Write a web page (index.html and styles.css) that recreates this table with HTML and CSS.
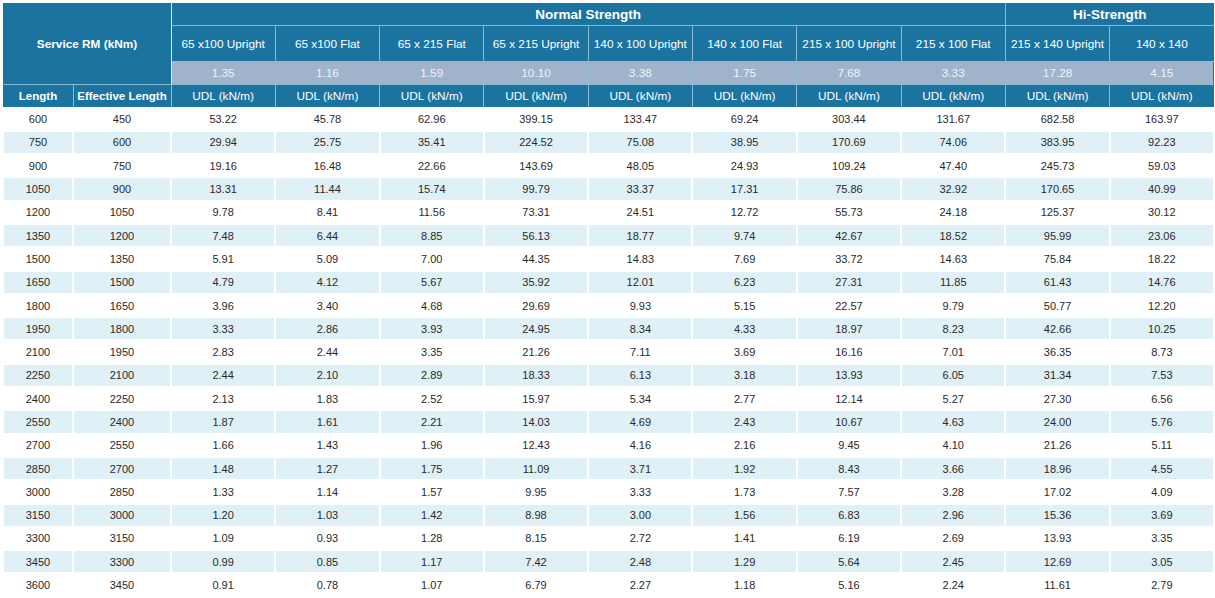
FILE: index.html
```html
<!DOCTYPE html>
<html>
<head>
<meta charset="utf-8">
<link rel="stylesheet" href="styles.css">
</head>
<body>
<table class="grid">
<colgroup>
<col class="c-len"><col class="c-eff">
<col class="c-v"><col class="c-v"><col class="c-v"><col class="c-v"><col class="c-v"><col class="c-v"><col class="c-v"><col class="c-v"><col class="c-v"><col class="c-v">
</colgroup>
<thead>
<tr class="h1">
<th class="svc" colspan="2" rowspan="3">Service RM (kNm)</th>
<th class="grp" colspan="8">Normal Strength</th>
<th class="grp" colspan="2">Hi-Strength</th>
</tr>
<tr class="h2">
<th>65 x100 Upright</th><th>65 x100 Flat</th><th>65 x 215 Flat</th><th>65 x 215 Upright</th><th>140 x 100 Upright</th><th>140 x 100 Flat</th><th>215 x 100 Upright</th><th>215 x 100 Flat</th><th>215 x 140 Upright</th><th>140 x 140</th>
</tr>
<tr class="h3">
<th>1.35</th><th>1.16</th><th>1.59</th><th>10.10</th><th>3.38</th><th>1.75</th><th>7.68</th><th>3.33</th><th>17.28</th><th>4.15</th>
</tr>
<tr class="h4">
<th class="b">Length</th><th class="b">Effective Length</th>
<th>UDL (kN/m)</th><th>UDL (kN/m)</th><th>UDL (kN/m)</th><th>UDL (kN/m)</th><th>UDL (kN/m)</th><th>UDL (kN/m)</th><th>UDL (kN/m)</th><th>UDL (kN/m)</th><th>UDL (kN/m)</th><th>UDL (kN/m)</th>
</tr>
</thead>
<tbody>
<tr><td>600</td><td>450</td><td>53.22</td><td>45.78</td><td>62.96</td><td>399.15</td><td>133.47</td><td>69.24</td><td>303.44</td><td>131.67</td><td>682.58</td><td>163.97</td></tr>
<tr><td>750</td><td>600</td><td>29.94</td><td>25.75</td><td>35.41</td><td>224.52</td><td>75.08</td><td>38.95</td><td>170.69</td><td>74.06</td><td>383.95</td><td>92.23</td></tr>
<tr><td>900</td><td>750</td><td>19.16</td><td>16.48</td><td>22.66</td><td>143.69</td><td>48.05</td><td>24.93</td><td>109.24</td><td>47.40</td><td>245.73</td><td>59.03</td></tr>
<tr><td>1050</td><td>900</td><td>13.31</td><td>11.44</td><td>15.74</td><td>99.79</td><td>33.37</td><td>17.31</td><td>75.86</td><td>32.92</td><td>170.65</td><td>40.99</td></tr>
<tr><td>1200</td><td>1050</td><td>9.78</td><td>8.41</td><td>11.56</td><td>73.31</td><td>24.51</td><td>12.72</td><td>55.73</td><td>24.18</td><td>125.37</td><td>30.12</td></tr>
<tr><td>1350</td><td>1200</td><td>7.48</td><td>6.44</td><td>8.85</td><td>56.13</td><td>18.77</td><td>9.74</td><td>42.67</td><td>18.52</td><td>95.99</td><td>23.06</td></tr>
<tr><td>1500</td><td>1350</td><td>5.91</td><td>5.09</td><td>7.00</td><td>44.35</td><td>14.83</td><td>7.69</td><td>33.72</td><td>14.63</td><td>75.84</td><td>18.22</td></tr>
<tr><td>1650</td><td>1500</td><td>4.79</td><td>4.12</td><td>5.67</td><td>35.92</td><td>12.01</td><td>6.23</td><td>27.31</td><td>11.85</td><td>61.43</td><td>14.76</td></tr>
<tr><td>1800</td><td>1650</td><td>3.96</td><td>3.40</td><td>4.68</td><td>29.69</td><td>9.93</td><td>5.15</td><td>22.57</td><td>9.79</td><td>50.77</td><td>12.20</td></tr>
<tr><td>1950</td><td>1800</td><td>3.33</td><td>2.86</td><td>3.93</td><td>24.95</td><td>8.34</td><td>4.33</td><td>18.97</td><td>8.23</td><td>42.66</td><td>10.25</td></tr>
<tr><td>2100</td><td>1950</td><td>2.83</td><td>2.44</td><td>3.35</td><td>21.26</td><td>7.11</td><td>3.69</td><td>16.16</td><td>7.01</td><td>36.35</td><td>8.73</td></tr>
<tr><td>2250</td><td>2100</td><td>2.44</td><td>2.10</td><td>2.89</td><td>18.33</td><td>6.13</td><td>3.18</td><td>13.93</td><td>6.05</td><td>31.34</td><td>7.53</td></tr>
<tr><td>2400</td><td>2250</td><td>2.13</td><td>1.83</td><td>2.52</td><td>15.97</td><td>5.34</td><td>2.77</td><td>12.14</td><td>5.27</td><td>27.30</td><td>6.56</td></tr>
<tr><td>2550</td><td>2400</td><td>1.87</td><td>1.61</td><td>2.21</td><td>14.03</td><td>4.69</td><td>2.43</td><td>10.67</td><td>4.63</td><td>24.00</td><td>5.76</td></tr>
<tr><td>2700</td><td>2550</td><td>1.66</td><td>1.43</td><td>1.96</td><td>12.43</td><td>4.16</td><td>2.16</td><td>9.45</td><td>4.10</td><td>21.26</td><td>5.11</td></tr>
<tr><td>2850</td><td>2700</td><td>1.48</td><td>1.27</td><td>1.75</td><td>11.09</td><td>3.71</td><td>1.92</td><td>8.43</td><td>3.66</td><td>18.96</td><td>4.55</td></tr>
<tr><td>3000</td><td>2850</td><td>1.33</td><td>1.14</td><td>1.57</td><td>9.95</td><td>3.33</td><td>1.73</td><td>7.57</td><td>3.28</td><td>17.02</td><td>4.09</td></tr>
<tr><td>3150</td><td>3000</td><td>1.20</td><td>1.03</td><td>1.42</td><td>8.98</td><td>3.00</td><td>1.56</td><td>6.83</td><td>2.96</td><td>15.36</td><td>3.69</td></tr>
<tr><td>3300</td><td>3150</td><td>1.09</td><td>0.93</td><td>1.28</td><td>8.15</td><td>2.72</td><td>1.41</td><td>6.19</td><td>2.69</td><td>13.93</td><td>3.35</td></tr>
<tr><td>3450</td><td>3300</td><td>0.99</td><td>0.85</td><td>1.17</td><td>7.42</td><td>2.48</td><td>1.29</td><td>5.64</td><td>2.45</td><td>12.69</td><td>3.05</td></tr>
<tr><td>3600</td><td>3450</td><td>0.91</td><td>0.78</td><td>1.07</td><td>6.79</td><td>2.27</td><td>1.18</td><td>5.16</td><td>2.24</td><td>11.61</td><td>2.79</td></tr>
</tbody>
</table>
</body>
</html>
```
FILE: styles.css
```css
html, body {
  margin: 0;
  padding: 0;
  background: #ffffff;
}
body {
  padding: 3px 2px 0 2px;
  font-family: "Liberation Sans", Arial, sans-serif;
}
.grid {
  width: 1211px;
  table-layout: fixed;
  border-collapse: collapse;
  border-spacing: 0;
}
.c-len { width: 70px; }
.c-eff { width: 98px; }
.c-v { width: 104.3px; }

.grid th {
  background: #1b74a0;
  color: #ffffff;
  font-weight: normal;
  font-size: 11.8px;
  padding: 0;
  text-align: center;
  vertical-align: middle;
  border: 1px solid #8dbad3;
  white-space: nowrap;
  overflow: hidden;
}
.grid .h1 th { border-top-color: #1b74a0; }
.grid th.svc {
  font-weight: bold;
  font-size: 11.8px;
  border-left-color: #1b74a0;
  border-right-color: #dbe9f1;
}
.grid th.grp {
  font-weight: bold;
  font-size: 13.5px;
}
.grid .h1 th:last-child,
.grid .h2 th:last-child,
.grid .h3 th:last-child,
.grid .h4 th:last-child { border-right-color: #1b74a0; }
.grid .h4 th:first-child { border-left-color: #1b74a0; }
.grid th.b {
  font-weight: bold;
  font-size: 11.5px;
}
.h1 { height: 22px; }
.h2 { height: 36px; }
.h3 { height: 23px; }
.h4 { height: 23px; }
.grid .h3 th {
  background: #9fb3cb;
  color: #eef3f8;
}

.grid td {
  height: 21.3px;
  padding: 0;
  border: 2px solid #ffffff;
  text-align: center;
  vertical-align: middle;
  font-size: 11px;
  color: #2a2a2a;
  white-space: nowrap;
}
.grid tbody tr:nth-child(even) td {
  background: #dff0f6;
}
```
